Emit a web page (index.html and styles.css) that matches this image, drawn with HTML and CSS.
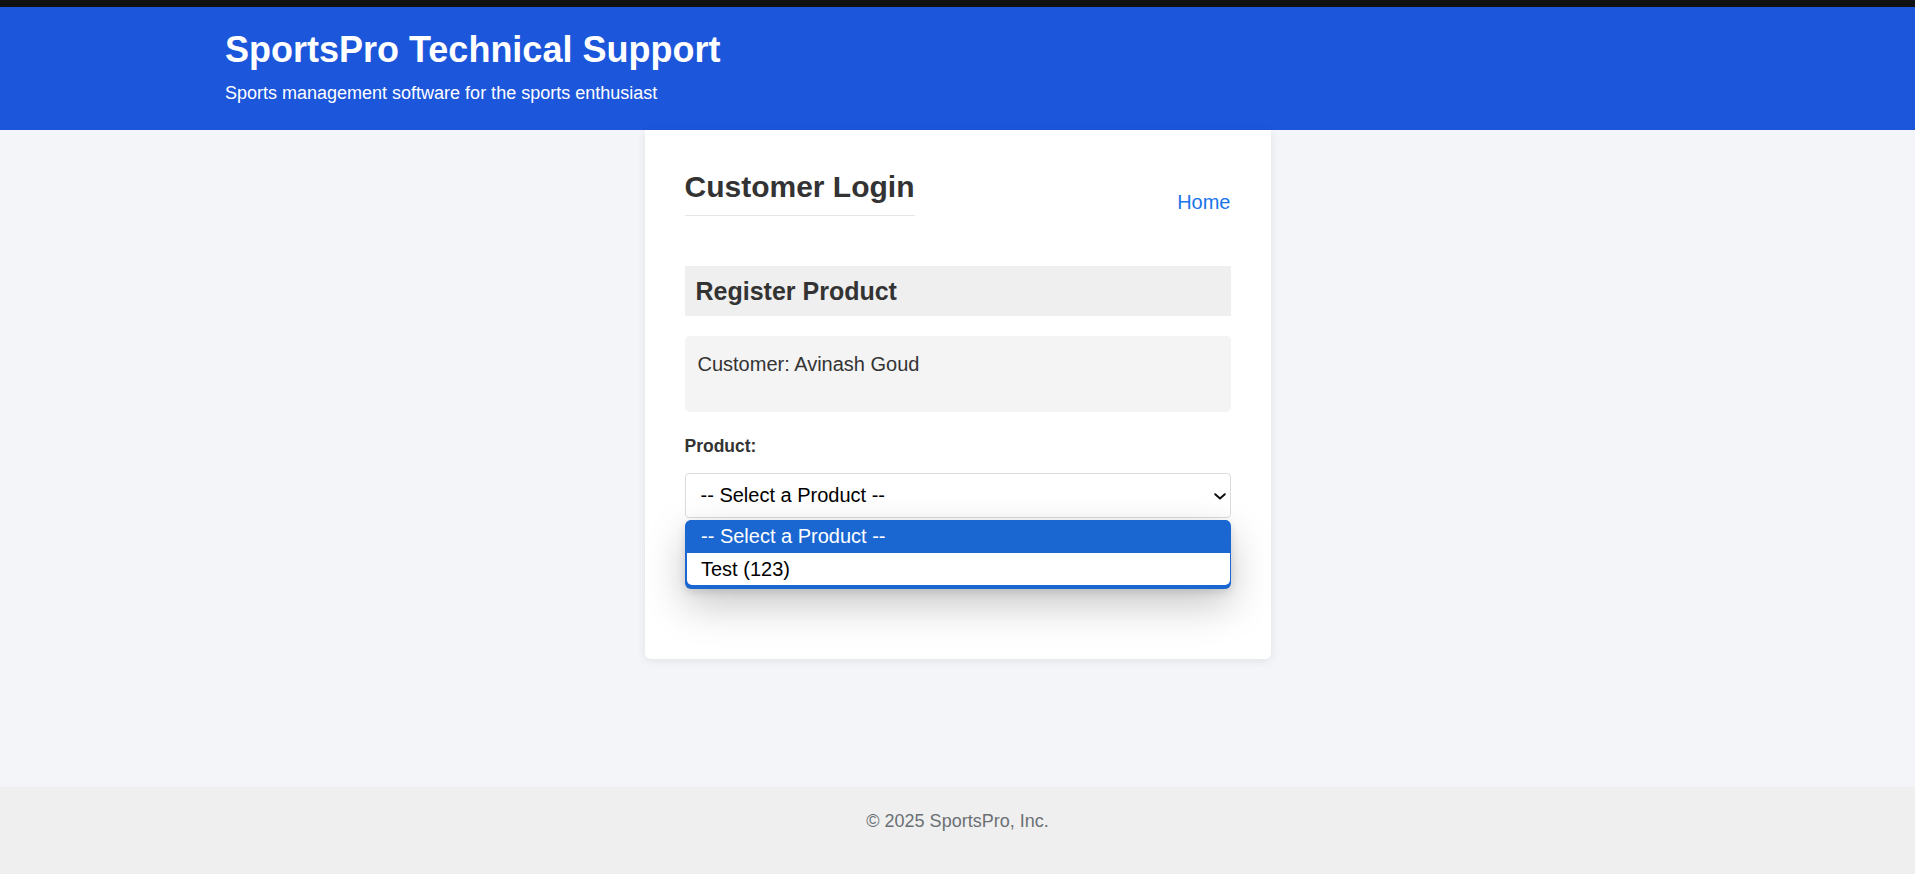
FILE: index.html
```html
<!DOCTYPE html>
<html lang="en">
<head>
<meta charset="utf-8">
<title>SportsPro Technical Support</title>
<link rel="stylesheet" href="styles.css">
</head>
<body>
<header class="site-header">
  <div class="container">
    <h1 class="site-title">SportsPro Technical Support</h1>
    <p class="site-tagline">Sports management software for the sports enthusiast</p>
  </div>
</header>
<main class="site-main">
  <section class="card">
    <div class="card-head">
      <h2 class="card-title">Customer Login</h2>
      <a class="home-link" href="#">Home</a>
    </div>
    <h3 class="section-title">Register Product</h3>
    <div class="customer-box">
      <p class="customer-name">Customer: Avinash Goud</p>
    </div>
    <form class="register-form">
      <label class="field-label" for="product">Product:</label>
      <div class="select-wrap">
        <select id="product" class="select">
          <option>-- Select a Product --</option>
          <option>Test (123)</option>
        </select>
        <svg class="select-arrow" viewBox="0 0 12 7" width="12" height="7" aria-hidden="true"><polyline points="1.2,1.2 6,5.6 10.8,1.2" fill="none" stroke="#111" stroke-width="2" stroke-linecap="round" stroke-linejoin="round"/></svg>
        <ul class="dropdown">
          <li class="dropdown-option is-active">-- Select a Product --</li>
          <li class="dropdown-option is-last">Test (123)</li>
        </ul>
      </div>
    </form>
  </section>
</main>
<footer class="site-footer">
  <p class="copyright">© 2025 SportsPro, Inc.</p>
</footer>
</body>
</html>
```

FILE: styles.css
```css
* {
  box-sizing: border-box;
}

html, body {
  margin: 0;
  padding: 0;
}

body {
  font-family: "Liberation Sans", Arial, sans-serif;
  background: #f4f5f9;
  color: #333;
  min-height: 100vh;
  display: flex;
  flex-direction: column;
}

.site-header {
  background: #1b56db;
  border-top: 7px solid #111111;
  padding: 21.5px 0 25.6px;
  color: #fff;
}

.container {
  max-width: 1465px;
  margin: 0 auto;
}

.site-title {
  margin: 0 0 12.8px;
  font-size: 36px;
  font-weight: bold;
  line-height: normal;
}

.site-tagline {
  margin: 0;
  font-size: 18px;
  line-height: normal;
}

.site-main {
  flex: 1;
}

.card {
  width: 626px;
  margin: 0 auto;
  background: #fff;
  border-radius: 0 0 6px 6px;
  box-shadow: 0 2px 10px rgba(0, 0, 0, 0.08);
  padding: 40px 40px 141px;
}

.card-head {
  display: flex;
  justify-content: space-between;
  align-items: flex-end;
  margin-bottom: 50.5px;
}

.card-title {
  margin: 0;
  font-size: 30px;
  font-weight: bold;
  line-height: normal;
  color: #333;
  padding-bottom: 11px;
  border-bottom: 1px solid #e6e6e6;
}

.home-link {
  font-size: 20px;
  color: #1a73e8;
  text-decoration: none;
  margin-bottom: 2px;
}

.section-title {
  margin: 0 0 20px;
  padding: 11px 11px 10px;
  background: #efefef;
  font-size: 25px;
  font-weight: bold;
  line-height: normal;
  color: #333;
}

.customer-box {
  background: #f4f4f4;
  border-radius: 5px;
  padding: 17px 13px 36px;
  margin-bottom: 23.5px;
}

.customer-name {
  margin: 0;
  font-size: 20px;
  line-height: normal;
  color: #333;
}

.field-label {
  display: block;
  font-size: 17.5px;
  font-weight: bold;
  color: #333;
  margin-bottom: 15.8px;
}

.select-wrap {
  position: relative;
}

.select {
  display: block;
  width: 100%;
  height: 45px;
  padding: 0 40px 0 15px;
  border: 1px solid #dcdcdc;
  border-radius: 4px;
  background: #fff;
  color: #000;
  font-family: "Liberation Sans", Arial, sans-serif;
  font-size: 20px;
  -webkit-appearance: none;
  appearance: none;
}

.select-arrow {
  position: absolute;
  right: 4.5px;
  top: 20px;
  width: 12px;
  height: 7px;
}

.dropdown {
  position: absolute;
  top: calc(100% + 2px);
  left: 0;
  right: 0;
  z-index: 10;
  margin: 0;
  padding: 0 1px 4px 2px;
  list-style: none;
  background: #1a67d2;
  border-radius: 6px;
  box-shadow: 0 16px 40px rgba(0, 0, 0, 0.22), 0 3px 8px rgba(0, 0, 0, 0.12);
}

.dropdown-option {
  height: 33px;
  line-height: 33px;
  padding-left: 14.5px;
  font-size: 20px;
  color: #000;
  background: #fff;
}

.dropdown-option.is-active {
  background: #1a67d2;
  color: #fff;
  border-radius: 5px 5px 0 0;
}

.dropdown-option.is-last {
  height: 32.5px;
  line-height: 32.5px;
  border-radius: 0 0 5px 5px;
}

.site-footer {
  background: #efefef;
  padding: 24px 0 42px;
  text-align: center;
}

.copyright {
  margin: 0;
  font-size: 18px;
  line-height: normal;
  color: #6b6f74;
}
```
